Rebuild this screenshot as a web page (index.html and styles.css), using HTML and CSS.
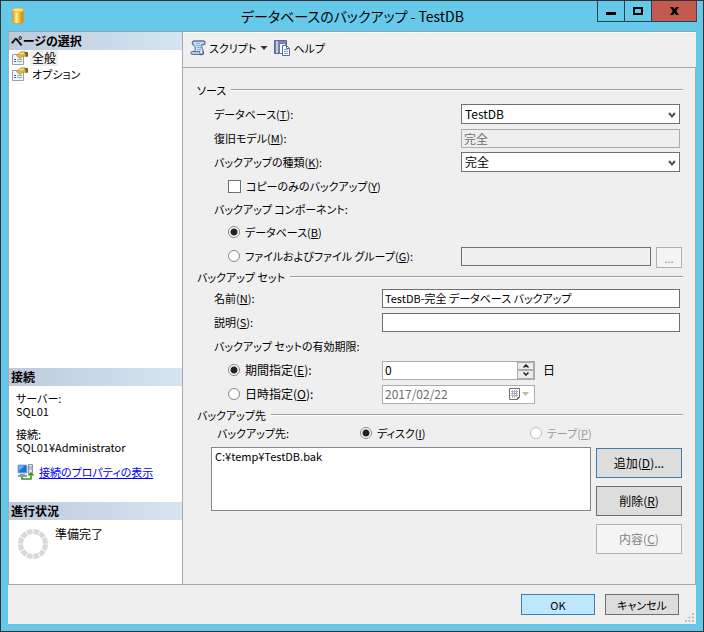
FILE: index.html
```html
<!DOCTYPE html>
<html lang="ja">
<head>
<meta charset="utf-8">
<title>データベースのバックアップ - TestDB</title>
<link rel="stylesheet" href="styles.css">
</head>
<body>
<div class="window">
  <header class="titlebar">
    <svg class="app-icon" width="14" height="18" viewBox="0 0 14 18">
      <defs><linearGradient id="gold"><stop offset="0" stop-color="#d9930f"/><stop offset=".35" stop-color="#fff0a0"/><stop offset=".65" stop-color="#f2b61e"/><stop offset="1" stop-color="#c07c10"/></linearGradient></defs>
      <path d="M1.500 3v11.500c0 3 11 3 11 0V3z" fill="url(#gold)" stroke="#c9a050"/>
      <ellipse cx="7" cy="3" rx="5.500" ry="2" fill="#ffe584" stroke="#e0b448"/>
    </svg>
    <h1 class="title">データベースのバックアップ - TestDB</h1>
    <div class="caption-buttons">
      <button class="caption" type="button" aria-label="最小化"><svg width="12" height="12" viewBox="0 0 12 12"><path d="M1 7h10v3H1z"/></svg></button>
      <button class="caption" type="button" aria-label="最大化"><svg width="12" height="12" viewBox="0 0 12 12"><path fill-rule="evenodd" d="M1 2h10v8H1zM3 4v4h6V4z"/></svg></button>
      <button class="caption caption-close" type="button" aria-label="閉じる"><svg width="12" height="12" viewBox="0 0 12 12"><path d="M2 2h3l1.500 2L8 2h3L8.200 6l2.800 4H8L6.500 8 5 10H2l2.800-4z"/></svg></button>
    </div>
  </header>

  <div class="client">
    <aside class="sidebar">
      <section class="side-pages">
        <h2 class="side-head">ページの選択</h2>
        <ul class="pages">
          <li><svg width="16" height="14" viewBox="0 0 16 14"><use href="#page-icon"/></svg><a class="page current" href="#general">全般</a></li>
          <li><svg width="16" height="14" viewBox="0 0 16 14"><use href="#page-icon"/></svg><a class="page" href="#options">オプション</a></li>
        </ul>
      </section>
      <section class="side-connection">
        <h2 class="side-head">接続</h2>
        <dl class="connection">
          <dt>サーバー:</dt><dd>SQL01</dd>
          <dt>接続:</dt><dd>SQL01¥Administrator</dd>
        </dl>
        <div class="props">
          <svg width="17" height="16" viewBox="0 0 17 16">
            <path d="M1 1h9v8H1z" fill="#1f6fd6" stroke="#9db4d2"/><path d="M2 2h5L2 7z" fill="#68b3f5"/>
            <path d="M3 10h5v1H3zM1 11h9v2H1z" fill="#8b9ab0"/>
            <path d="M11.500 .5h4v9h-4z" fill="#dce4ee" stroke="#8796ad"/><path d="M12 3h3M12 5h3" stroke="#8796ad"/>
            <path d="M5 13v2h9V9M11.500 11.500L14 9l2.500 2.500" fill="none" stroke="#2f9614" stroke-width="1.500"/>
          </svg>
          <a class="props-link" href="#connection">接続のプロパティの表示</a>
        </div>
      </section>
      <section class="side-progress">
        <h2 class="side-head">進行状況</h2>
        <div class="progress">
          <svg width="30" height="30" viewBox="0 0 30 30"><circle cx="15" cy="15" r="12.500" fill="none" stroke="#d9d9d9" stroke-width="5" pathLength="120" stroke-dasharray="8.500 1.500" stroke-dashoffset="-.75"/></svg>
          <span>準備完了</span>
        </div>
      </section>
    </aside>

    <main class="main">
      <div class="toolbar">
        <button class="tool" type="button">
          <svg width="16" height="16" viewBox="0 0 16 16">
            <path d="M4 1h9.500v3H11l2 8H5.500L7 9 3 5z" fill="#cfe0f8"/>
            <path d="M3.500 5C1.500 3 2.500 1 4.500 1h9c2 0 2 3.500 0 3.500h-2" fill="none" stroke="#5b7299" stroke-width="1.500"/>
            <path d="M3.500 5C6 7 6 9 4.500 11.500M11.500 4.500C11 7.500 13.500 9 13 12" fill="none" stroke="#7c94bc" stroke-width="1.500"/>
            <path d="M2 11.500h8c-1 1.500 0 3 1.500 3H2c-1.500 0-1.500-3 0-3z" fill="#b4c9ea" stroke="#5b7299"/>
            <path d="M10 14.500c3.500.5 4-1.500 3-3" fill="none" stroke="#465c82" stroke-width="1.500"/>
            <path d="M6 3.500h4M6.500 5.500h4M7 7.500h4M7 9.500h4" stroke="#8fa9d4"/>
          </svg>
          <span>スクリプト</span>
        </button>
        <button class="tool tool-arrow" type="button" aria-label="スクリプトのメニュー"><svg width="8" height="5" viewBox="0 0 8 5"><path d="M.5 0h7L4 4z" fill="#333"/></svg></button>
        <button class="tool tool-help" type="button">
          <svg width="16" height="16" viewBox="0 0 16 16">
            <path d="M.5.500h12v13H.5z" fill="#7c80bf" stroke="#5d6297"/><path d="M3 1v12" stroke="#c3c6ee" stroke-width="2"/>
            <path d="M5.500 3.500h5l2 2v8h-7z" fill="#f7faff" stroke="#6a7fa5"/>
            <path d="M8.500 5.500h4l3 3v7h-7z" fill="#fff" stroke="#557096"/><path d="M10 9.500h4M10 11.500h4M10 13.500h4" stroke="#86a0c6"/><path d="M12.500 5.500v3h3" fill="none" stroke="#557096"/>
          </svg>
          <span>ヘルプ</span>
        </button>
      </div>

      <form class="form">
        <h2 class="group">ソース</h2>
        <div class="row source first">
          <label for="db">データベース(<u>T</u>):</label>
          <span class="combo"><select id="db"><option>TestDB</option></select><svg width="8" height="6" viewBox="0 0 8 6"><use href="#chevron"/></svg></span>
        </div>
        <div class="row source">
          <label for="model">復旧モデル(<u>M</u>):</label>
          <input class="text" id="model" type="text" value="完全" disabled>
        </div>
        <div class="row source">
          <label for="kind">バックアップの種類(<u>K</u>):</label>
          <span class="combo"><select id="kind"><option>完全</option></select><svg width="8" height="6" viewBox="0 0 8 6"><use href="#chevron"/></svg></span>
        </div>
        <div class="row option"><input class="check" id="copy" type="checkbox"><label for="copy">コピーのみのバックアップ(<u>Y</u>)</label></div>
        <div class="row short">バックアップ コンポーネント:</div>
        <div class="row option"><input class="radio" id="c-db" type="radio" name="component" checked><label for="c-db">データベース(<u>B</u>)</label></div>
        <div class="row source browse">
          <div class="choice"><input class="radio" id="c-file" type="radio" name="component"><label for="c-file">ファイルおよびファイル グループ(<u>G</u>):</label></div>
          <input class="text inactive" type="text" readonly aria-label="ファイル グループ">
          <button class="btn dots" type="button" disabled>...</button>
        </div>

        <h2 class="group">バックアップ セット</h2>
        <div class="row set">
          <label for="name">名前(<u>N</u>):</label>
          <input class="text" id="name" type="text" value="TestDB-完全 データベース バックアップ">
        </div>
        <div class="row set">
          <label for="desc">説明(<u>S</u>):</label>
          <input class="text" id="desc" type="text">
        </div>
        <div class="row">バックアップ セットの有効期限:</div>
        <div class="row set expiry">
          <div class="choice"><input class="radio" id="e-days" type="radio" name="expire" checked><label for="e-days">期間指定(<u>E</u>):</label></div>
          <div class="box">
            <input type="text" value="0" aria-label="日数">
            <span class="spin">
              <button type="button" aria-label="増やす"><svg width="6" height="4" viewBox="0 0 6 4"><path d="M.5 3.500L3 1l2.500 2.500" fill="none" stroke="#222" stroke-width="1.500"/></svg></button>
              <button type="button" aria-label="減らす"><svg width="6" height="4" viewBox="0 0 6 4"><path d="M.5.500L3 3 5.500.5" fill="none" stroke="#222" stroke-width="1.500"/></svg></button>
            </span>
          </div>
          <span>日</span>
        </div>
        <div class="row set expiry">
          <div class="choice"><input class="radio" id="e-date" type="radio" name="expire"><label for="e-date">日時指定(<u>O</u>):</label></div>
          <div class="box">
            <input type="text" value="2017/02/22" disabled aria-label="有効期限の日付">
            <button class="calendar" type="button" disabled aria-label="カレンダー">
              <svg width="20" height="12" viewBox="0 0 20 12"><path d="M.5.500h10v9l-2 2h-8z" fill="#fff" stroke="#786d6a"/><path d="M8.500 11.500v-2h2" fill="none" stroke="#786d6a"/><path d="M2 3.500h7M2 5.500h7M2 7.500h7M3.500 2v8M5.500 2v8M7.500 2v7" stroke="#aeb4c8"/><path d="M13 4h7l-3.500 4z" fill="#bcbcae"/></svg>
            </button>
          </div>
        </div>

        <h2 class="group">バックアップ先</h2>
        <div class="targets">
          <span>バックアップ先:</span>
          <div class="choice"><input class="radio" id="t-disk" type="radio" name="target" checked><label for="t-disk">ディスク(<u>I</u>)</label></div>
          <div class="choice disabled"><input class="radio" id="t-tape" type="radio" name="target" disabled><label for="t-tape">テープ(<u>P</u>)</label></div>
        </div>
        <div class="media">
          <select class="list" size="4" aria-label="バックアップ先"><option>C:¥temp¥TestDB.bak</option></select>
          <div class="media-buttons">
            <button class="btn focus" type="button">追加(<u>D</u>)...</button>
            <button class="btn" type="button">削除(<u>R</u>)</button>
            <button class="btn" type="button" disabled>内容(<u>C</u>)</button>
          </div>
        </div>
      </form>
    </main>

    <footer class="footer">
      <button class="btn default" type="button">OK</button>
      <button class="btn" type="button">キャンセル</button>
      <svg class="grip" width="9" height="9" viewBox="0 0 9 9"><path d="M7 0h2v2H7zM3.500 3.500h2v2h-2zM7 3.500h2v2H7zM0 7h2v2H0zM3.500 7h2v2h-2zM7 7h2v2H7z" fill="#bdbdbd"/></svg>
    </footer>
  </div>
</div>

<svg class="symbols" width="0" height="0">
  <symbol id="chevron" viewBox="0 0 8 6"><path d="M1 1l3 3.500L7 1" fill="none" stroke="#555" stroke-width="2"/></symbol>
  <symbol id="page-icon" viewBox="0 0 16 14">
    <path d="M.5 3.500h11v10H.5z" fill="#f5f8ff" stroke="#9a9fae"/>
    <path d="M2 8.500h2M2 10.500h2" stroke="#4265ae"/><path d="M5 8.500h5M5 10.500h5" stroke="#8f9fd0"/>
    <path d="M4.500 4.500L9 .8h4L14.500 3v2.500L11 5 8.500 7.500 6 6z" fill="#e8b830" stroke="#a98a45" stroke-width=".7"/>
    <path d="M12.500 1H16v4.500l-2 .5z" fill="#6c6a48"/><path d="M8 2.500l4-.5" stroke="#fff2a4"/>
  </symbol>
</svg>
</body>
</html>
```
FILE: styles.css
```css
* { box-sizing: border-box; }

body {
  margin: 0;
  font: 11px/16px "Noto Sans CJK JP", sans-serif;
  font-feature-settings: "palt";
  color: #000;
}

h1, h2, ul, dl, dd { margin: 0; padding: 0; font-size: inherit; font-weight: normal; }
ul { list-style: none; }
svg { display: block; flex: none; }
input, select, button { font: inherit; font-feature-settings: inherit; color: inherit; margin: 0; border-radius: 0; }
button { padding: 0; }
.symbols { position: absolute; }

.window {
  display: flex;
  flex-direction: column;
  min-height: 100vh;
  border: 1px solid #333;
  background: #66c9ea;
  padding: 0 7px 7px;
}

/* Title bar */
.titlebar {
  display: grid;
  grid-template-columns: 1fr auto 1fr;
  height: 30px;
  margin-right: -1px;
}
.app-icon { margin: 6px 0 0 3px; }
.title { font-size: 14px; line-height: 30px; }
.caption-buttons { display: flex; justify-self: end; height: 21px; }
.caption {
  display: grid;
  place-items: center;
  width: 27px;
  border: 1px solid #23404c;
  border-top: 0;
  border-right: 0;
  background: none;
}
.caption-close { width: 46px; border-right: 1px solid #6b3532; background: #c35a50; }

/* Client area */
.client {
  flex: 1;
  display: grid;
  grid-template-columns: 175px 1fr;
  grid-template-rows: 1fr 39px;
  border-top: 1px solid #8fa5b4;
  background: #efefef;
}
.sidebar {
  display: flex;
  flex-direction: column;
  border: 1px solid #a9a9b0;
  border-top: 0;
  background: #fff;
}
.side-pages { flex: 1; }
.side-connection { height: 134px; }
.side-progress { height: 82px; }
.side-head {
  height: 18px;
  padding-left: 2px;
  font-size: 12px;
  line-height: 18px;
  font-weight: bold;
  background: linear-gradient(to right, #bdcada, #d7e4f2);
}
.pages li { display: flex; align-items: center; gap: 2px; height: 16px; padding-left: 3px; }
.page { padding: 0 2px; color: #000; text-decoration: none; }
.page.current { background: #efefef; font-size: 12px; }
.connection { padding: 6px 7px 0; line-height: 13px; }
.connection dd { margin-bottom: 10px; }
.props { display: flex; align-items: center; gap: 5px; padding-left: 8px; }
.props-link { color: #00f; }
.progress { display: flex; gap: 7px; padding: 6px 9px; font-size: 12px; }
.progress svg { margin-top: 3px; }

/* Toolbar */
.main { display: flex; flex-direction: column; }
.toolbar {
  display: flex;
  align-items: center;
  height: 36px;
  padding: 0 7px 4px;
  border-top: 1px solid #fff;
  border-bottom: 1px solid #a9a9b0;
}
.tool { display: flex; align-items: center; gap: 3px; border: 0; background: none; }
.tool-arrow { padding: 0 6px 0 4px; }

/* Form */
.form {
  flex: 1;
  padding: 13px 12px 0 14px;
  border-right: 1px solid #a9a9b0;
  border-bottom: 1px solid #a9a9b0;
}
.group { display: flex; align-items: center; gap: 5px; height: 18px; }
.group::after { content: ""; flex: 1; height: 2px; background: linear-gradient(#a0a0a0 50%, #fff 50%); }
.row { display: grid; align-items: center; height: 24px; padding: 0 3px 0 17px; }
.first { margin-top: 3px; }
.short { height: 22px; }
.source { grid-template-columns: 247px 1fr; }
.set { grid-template-columns: 168px 1fr; }
.browse { grid-template-columns: 247px 1fr 31px; padding-right: 1px; }
.expiry { grid-template-columns: 168px 153px 1fr; font-size: 12px; }
.expiry > span { padding-left: 8px; }
.option, .choice { display: flex; align-items: center; gap: 5px; }
.option { padding-left: 31px; }
.row .choice { padding-left: 14px; }

.text, .box { width: 100%; height: 19px; border: 1px solid #707070; background: #fff; }
.text { padding: 0 2px; }
.text:disabled { border-color: #abadb3; background: #efefef; color: #6d6d6d; font-size: 12px; }
.text.inactive { background: #efefef; }
.combo { position: relative; }
.combo select {
  display: block;
  width: 100%;
  height: 20px;
  padding: 0 3px;
  border: 1px solid #707070;
  background: #fff;
  font-size: 12px;
  appearance: none;
}
.combo svg { position: absolute; right: 4px; top: 8px; pointer-events: none; }

.box { display: flex; border-color: #abadb3; }
.box input { flex: 1; min-width: 0; padding: 0 2px; border: 0; background: none; }
.box input:disabled { color: #6d6d6d; }
.spin { display: flex; flex-direction: column; width: 17px; }
.spin button { display: grid; place-items: center; flex: 1; min-height: 0; border: 1px solid #abadb3; background: #ececec; }
.calendar { display: grid; place-items: center; padding-right: 5px; border: 0; background: none; }

.check, .radio {
  appearance: none;
  flex: none;
  width: 13px;
  height: 13px;
  border: 1px solid #707070;
  background: #fff;
}
.radio { width: 12px; height: 12px; border-color: #858585; border-radius: 50%; }
.radio:checked { background: radial-gradient(circle, #222 3px, #fff 4px); }
.radio:disabled { border-color: #bcbcbc; }
.disabled { color: #9a9a9a; }

.targets { display: grid; grid-template-columns: 143px 170px 1fr; align-items: center; height: 18px; padding-left: 20px; }
.media { display: grid; grid-template-columns: 1fr 86px; gap: 5px; align-items: start; margin-top: 5px; padding: 0 1px 0 14px; }
.list { width: 100%; height: 64px; padding: 0; border: 1px solid #828790; background: #fff; overflow: hidden; }
.list option { min-height: 0; padding: 0 3px; line-height: 14px; }
.media-buttons { display: grid; gap: 8px; padding-top: 1px; }

.btn { height: 30px; border: 1px solid #707070; background: #ddd; }
.media-buttons .btn { font-size: 12px; }
.btn.focus { border-color: #3c7fb1; }
.btn.default { border-color: #3c7fb1; background: #bee6fd; }
.btn:disabled { border-color: #adb2b5; background: #f4f4f4; color: #838383; }
.dots { width: 26px; height: 21px; margin: 3px 0 0 5px; }

/* Footer */
.footer { position: relative; grid-column: 1 / -1; display: flex; justify-content: flex-end; gap: 10px; padding: 9px 17px 0; }
.footer .btn { width: 74px; height: 21px; }
.grip { position: absolute; right: 2px; bottom: 2px; }
```
